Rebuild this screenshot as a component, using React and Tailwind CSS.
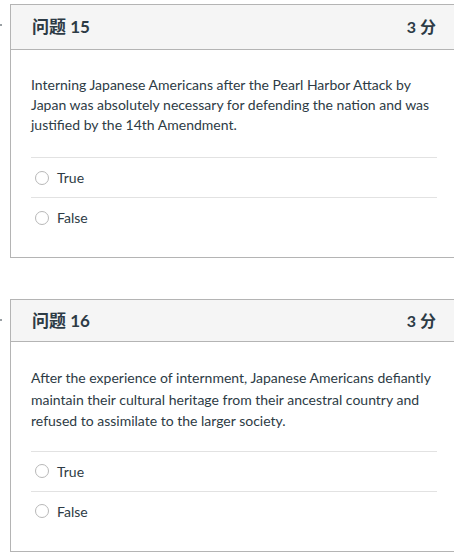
const questions = [
  {
    num: 15,
    text: 'Interning Japanese Americans after the Pearl Harbor Attack by Japan was absolutely necessary for defending the nation and was justified by the 14th Amendment.',
    leading: 'leading-[20px]',
    gap: 'mt-[22px]',
    header: 'h-[45px]',
  },
  {
    num: 16,
    text: 'After the experience of internment, Japanese Americans defiantly maintain their cultural heritage from their ancestral country and refused to assimilate to the larger society.',
    leading: 'leading-[21.5px]',
    gap: 'mt-[19px]',
    header: 'h-[42px]',
  },
];

function Answer({ label }) {
  return (
    <div className="flex h-[40px] items-center border-t border-[#e2e2e2]">
      <span className="ml-[4px] h-[14px] w-[14px] rounded-full border border-[#b8b8b8] bg-white" />
      <span className="ml-[8px] text-[14px] text-[#2d3b45]">{label}</span>
    </div>
  );
}

function Question({ q, className }) {
  return (
    <div className={`flex ${className}`}>
      <div className="w-[10px] shrink-0">
        <div className="mt-[20px] h-[2px] w-[2px] bg-[#9aa0a4]" />
      </div>
      <div className="w-[448px] shrink-0 border border-[#b4b4b4] bg-white">
        <div className={`flex ${q.header} items-center justify-between border-b border-[#b4b4b4] bg-[#f5f5f5] pl-[21px] pr-[21px] text-[17px] font-bold text-[#2d3b45]`}>
          <span>问题 {q.num}</span>
          <span className="text-[16px]">3 分</span>
        </div>
        <div className="px-[20px] pt-[25px] pb-[20px]">
          <p className={`text-[14px] ${q.leading} text-[#2d3b45]`}>{q.text}</p>
          <div className={q.gap}>
            <Answer label="True" />
            <Answer label="False" />
          </div>
        </div>
      </div>
    </div>
  );
}

export default function App() {
  return (
    <div
      className="h-[556px] w-[454px] overflow-hidden bg-white pt-[4px]"
      style={{ fontFamily: "Lato, 'Noto Sans CJK SC', sans-serif" }}
    >
      <Question q={questions[0]} />
      <Question q={questions[1]} className="mt-[41px]" />
    </div>
  );
}
